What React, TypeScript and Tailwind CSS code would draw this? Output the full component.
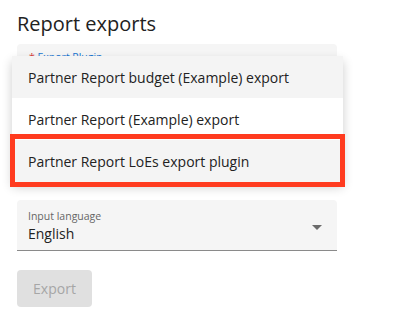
const options = [
  "Partner Report budget (Example) export",
  "Partner Report (Example) export",
  "Partner Report LoEs export plugin",
];

const App = () => {
  return (
    <div
      className="relative min-h-[319px] w-[393px] bg-white px-[17px] pt-[10px] text-[#222]"
      style={{ fontFamily: '"Open Sans", "Liberation Sans", sans-serif' }}
    >
      <h1 className="text-[20px] leading-[28px] text-[#222]">Report exports</h1>

      {/* export plugin select, covered by its open menu */}
      <div className="mt-[6px] h-[50px] w-[320px] rounded-t bg-[#f5f5f5] px-3 pt-[6px] text-[10.5px] leading-[14px]">
        <span className="text-[#d32f2f]">* </span>
        <span className="text-[#1976d2]">Export Plugin</span>
      </div>

      <div className="h-[106px]" />

      {/* input language select */}
      <div className="relative h-[51px] w-[320px] rounded-t bg-[#f5f5f5] border-b border-[#8a8a8a] px-[11px] pt-[9px]">
        <p className="text-[10.5px] leading-[14px] text-[#666]">Input language</p>
        <p className="text-[14px] leading-[22px] text-[#222]">English</p>
        <svg
          className="absolute right-[8px] top-[15px]"
          width="24"
          height="24"
          viewBox="0 0 24 24"
        >
          <path d="M7 10l5 5 5-5z" fill="#6b6b6b" />
        </svg>
      </div>

      <button
        disabled
        className="mt-[19px] h-[37px] w-[75px] rounded bg-[#e0e0e0] text-[14px] text-[#a6a6a6]"
      >
        Export
      </button>

      {/* open menu */}
      <ul className="absolute left-[12px] top-[56px] w-[331px] bg-white shadow-[0_5px_10px_rgba(0,0,0,0.2)]">
        {options.map((o, i) => (
          <li
            key={o}
            className={`flex h-[42px] items-center px-4 text-[14px] ${
              i === 1 ? "bg-white" : "bg-[#f4f4f4]"
            }`}
          >
            {o}
          </li>
        ))}
      </ul>

      {/* annotation box */}
      <div className="absolute left-[10px] top-[134px] h-[53px] w-[335px] border-[5px] border-[#ff3b1f]" />
    </div>
  );
};

export default App;
